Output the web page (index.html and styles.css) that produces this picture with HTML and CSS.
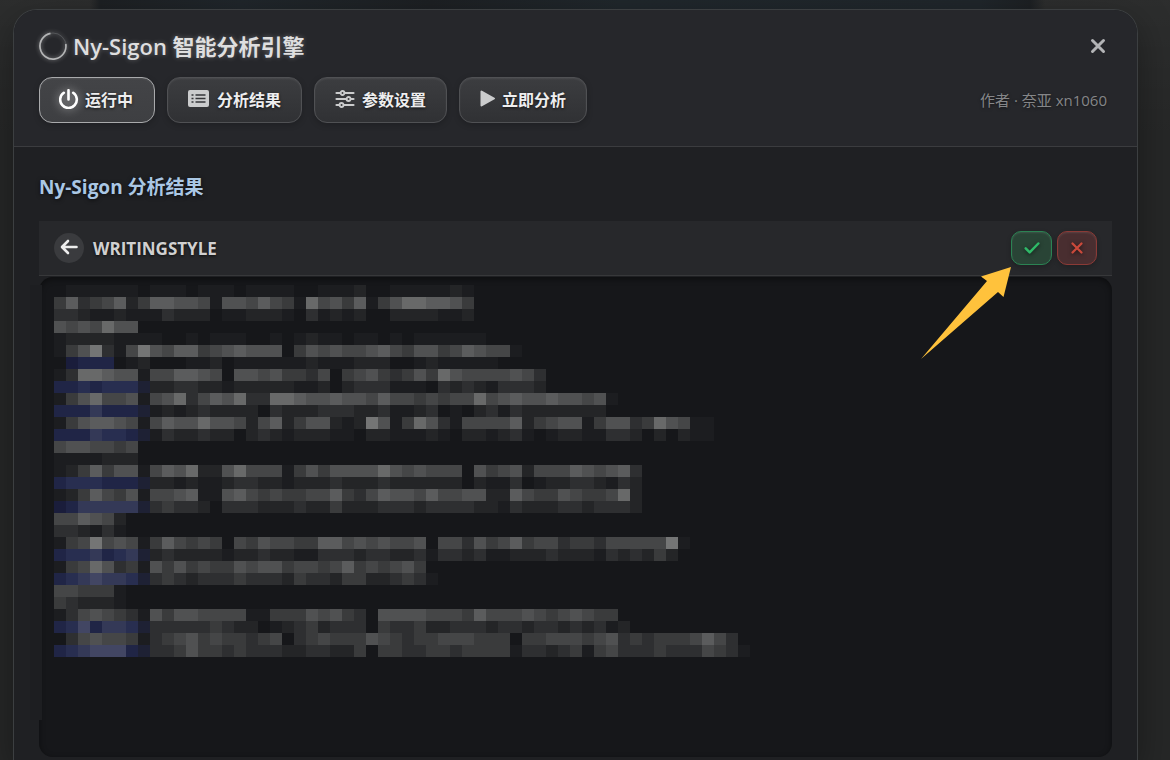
FILE: index.html
```html
<!DOCTYPE html>
<html lang="zh-CN">
<head>
<meta charset="utf-8">
<meta name="viewport" content="width=device-width, initial-scale=1">
<title>Ny-Sigon 智能分析引擎</title>
<link rel="stylesheet" href="styles.css">
</head>
<body>
<main class="panel">
  <header class="panel-header">
    <div class="title-row">
      <svg class="ring" viewBox="0 0 30 30" aria-hidden="true">
        <circle cx="15" cy="15" r="13" fill="none" stroke="#55575a" stroke-width="1"/>
        <path d="M12.5 2.3A13 13 0 1 0 27.8 13" fill="none" stroke="#b4b5b6" stroke-width="1.7"/>
      </svg>
      <h1 class="title">Ny-Sigon 智能分析引擎</h1>
      <button class="close" type="button" aria-label="关闭">
        <svg viewBox="0 0 16 16" width="16" height="16" aria-hidden="true"><path d="M2.500 2.500l11 11M13.500 2.500l-11 11" fill="none" stroke="currentColor" stroke-width="3" stroke-linecap="round"/></svg>
      </button>
    </div>
    <div class="action-row">
      <nav class="tabs">
        <button class="tab tab-active" type="button">
          <svg class="glow" viewBox="0 0 20 20" width="20" height="20" aria-hidden="true"><path d="M9.500 1.200v9.300M4.800 3.800a8.300 8.300 0 1 0 9.400 0" fill="none" stroke="currentColor" stroke-width="2.600" stroke-linecap="round"/></svg>
          运行中
        </button>
        <button class="tab" type="button">
          <svg viewBox="0 0 22 18" width="22" height="18" aria-hidden="true"><rect width="21" height="17" rx="2" fill="currentColor"/><path d="M7.500 5h10M7.500 8.500h10M7.500 12h10M3.500 5h2M3.500 8.500h2M3.500 12h2" stroke="#343538" stroke-width="1.500"/></svg>
          分析结果
        </button>
        <button class="tab" type="button">
          <svg viewBox="0 0 20 18" width="20" height="18" fill="none" stroke="currentColor" stroke-linecap="round" aria-hidden="true"><path d="M1.500 3h4M9.500 3h9M1.500 9h10M16 9h2.500M1.500 15h3M9 15h9.500" stroke-width="2.200"/><circle cx="7.500" cy="3" r="2" stroke-width="1.800"/><circle cx="13.500" cy="9" r="2" stroke-width="1.800"/><circle cx="6.500" cy="15" r="2" stroke-width="1.800"/></svg>
          参数设置
        </button>
        <button class="tab" type="button">
          <svg viewBox="0 0 15 18" width="15" height="18" aria-hidden="true"><path d="M1.500 1.500v14L14 8.500z" fill="currentColor" stroke="currentColor" stroke-width="2" stroke-linejoin="round"/></svg>
          立即分析
        </button>
      </nav>
      <span class="author">作者 · 奈亚 xn1060</span>
    </div>
  </header>
  <section class="results">
    <h2 class="subtitle">Ny-Sigon 分析结果</h2>
    <div class="toolbar">
      <button class="back" type="button" aria-label="返回">
        <svg viewBox="0 0 18 18" width="18" height="18" aria-hidden="true"><path d="M8 2L2 8l6 6M2.500 8H16.500" fill="none" stroke="currentColor" stroke-width="2.600" stroke-linecap="round" stroke-linejoin="round"/></svg>
      </button>
      <h3 class="entry-name">WRITINGSTYLE</h3>
      <button class="decide accept" type="button" aria-label="保存">
        <svg viewBox="0 0 16 14" width="16" height="14" aria-hidden="true"><path d="M1.700 7.300l4 4L14.300 2.500" fill="none" stroke="currentColor" stroke-width="2.500" stroke-linecap="round" stroke-linejoin="round"/></svg>
      </button>
      <button class="decide reject" type="button" aria-label="取消">
        <svg viewBox="0 0 14 14" width="14" height="14" aria-hidden="true"><path d="M2.500 2.500l9 9M11.500 2.500l-9 9" fill="none" stroke="currentColor" stroke-width="2.300" stroke-linecap="round"/></svg>
      </button>
      <svg class="pointer" viewBox="0 0 90 93" width="90" height="93" aria-hidden="true"><path d="M0 92L66 14 60 9.500 90 0 82.500 30 77 25z" fill="#ffc23c"/></svg>
    </div>
    <div class="editor">
      <svg class="mosaic" width="720" height="384" shape-rendering="crispEdges" role="img" aria-label="已打码内容"></svg>
    </div>
  </section>
</main>
<script src="mosaic.js"></script>
</body>
</html>
```
FILE: styles.css
```css
* { box-sizing: border-box; }

body {
  margin: 0;
  min-height: 100vh;
  display: flex;
  overflow: hidden;
  padding: 9px 32px 0 13px;
  color: #dededf;
  font-family: "Open Sans", "Noto Sans CJK SC", sans-serif;
  background:
    linear-gradient(90deg, transparent 90px, #1d2023 100px, #20262b 240px, #1d2023 430px, #20272c 620px, #20262b 980px, #1d2023 1030px, transparent 1045px) 0 0 / 100% 24px no-repeat,
    linear-gradient(180deg, rgba(255, 255, 255, .03), transparent 140px),
    #262727;
}

h1, h2, h3 { margin: 0; }

button {
  font: inherit;
  color: inherit;
  padding: 0;
  cursor: pointer;
}

svg { display: block; flex: none; }

.panel {
  flex: 1;
  display: flex;
  flex-direction: column;
  border: 1px solid #3c3f41;
  border-bottom: 0;
  border-radius: 24px 24px 0 0;
  background: #1f2023;
  box-shadow: 0 12px 36px rgba(0, 0, 0, .35);
}

.panel-header {
  padding: 19px 25px 23px;
  border-bottom: 1px solid #3b3c3f;
  border-radius: 23px 23px 0 0;
  background: #26272b;
}

.title-row {
  display: flex;
  align-items: center;
  height: 34px;
}

.ring {
  width: 30px;
  height: 30px;
  margin: 0 5px 0 -1px;
  filter: drop-shadow(0 0 2px rgba(255, 255, 255, .45));
}

.title {
  font-size: 22px;
  line-height: 36px;
  font-weight: 600;
  text-shadow: 0 0 5px rgba(255, 255, 255, .3);
}

.close {
  display: grid;
  place-items: center;
  width: 28px;
  height: 28px;
  margin: 0 0 0 auto;
  border: 0;
  background: none;
  color: #b3b4b6;
}

.action-row {
  display: flex;
  align-items: center;
  justify-content: space-between;
  margin-top: 14px;
}

.tabs { display: flex; gap: 12px; }

.tab {
  display: flex;
  align-items: center;
  gap: 7px;
  height: 46px;
  padding: 0 20px 2px 19px;
  border: 1px solid #505154;
  border-radius: 13px;
  background: linear-gradient(180deg, #3c3d40, #303134);
  box-shadow: inset 0 1px 2px rgba(255, 255, 255, .08), 0 2px 6px rgba(0, 0, 0, .2);
  color: #eeeeef;
  font-size: 16px;
  font-weight: 700;
  text-shadow: 0 1px 3px rgba(0, 0, 0, .7);
}

.tab:not(.tab-active) { padding: 0 20px 2px; }

.tab svg { color: #cbcccd; }

.tab-active {
  gap: 6px;
  padding-right: 21px;
  border-color: #a9aaac;
  background: linear-gradient(180deg, #434447, #3e3f42);
}

.tab-active .glow {
  color: #fff;
  filter: drop-shadow(0 0 5px rgba(255, 255, 255, .6));
}

.author {
  padding: 0 5px 2px 0;
  color: #858688;
  font-size: 15px;
  text-shadow: 0 1px 3px rgba(0, 0, 0, .5);
}

.results {
  flex: 1;
  display: flex;
  flex-direction: column;
  padding: 25px 25px 3px;
}

.subtitle {
  margin-bottom: 18px;
  color: #aac7e4;
  font-size: 19px;
  line-height: 31px;
  font-weight: 700;
  text-shadow: 0 1px 4px rgba(0, 0, 0, .7);
}

.toolbar {
  position: relative;
  z-index: 1;
  display: flex;
  align-items: center;
  height: 55px;
  padding: 0 15px;
  border-bottom: 1px solid #37383a;
  background: #27282b;
}

.back {
  display: grid;
  place-items: center;
  width: 30px;
  height: 30px;
  border: 0;
  border-radius: 50%;
  background: #3a3b3e;
  color: #ededed;
}

.entry-name {
  margin: 0 auto 0 9px;
  color: #d0d0d0;
  font-size: 17px;
  font-weight: 700;
  text-shadow: 0 1px 3px rgba(0, 0, 0, .7);
}

.decide {
  display: grid;
  place-items: center;
  width: 40px;
  height: 34px;
  border: 1px solid;
  border-radius: 10px;
  box-shadow: inset 0 1px 2px rgba(255, 255, 255, .1), 0 2px 5px rgba(0, 0, 0, .2);
}

.decide svg { filter: drop-shadow(0 1px 2px rgba(0, 0, 0, .6)); }

.accept { width: 41px; border-color: #2b8353; background: #294436; color: #2fb968; }
.reject { margin-left: 5px; border-color: #8b3a36; background: #492e30; color: #ca493b; }

.pointer {
  position: absolute;
  top: 46px;
  right: 101px;
}

.editor {
  position: relative;
  flex: 1;
  margin-top: 1px;
  padding: 8px 15px;
  border-radius: 14px;
  background: #16171a;
  box-shadow: inset 0 2px 6px rgba(0, 0, 0, .45);
}

.editor::before {
  content: "";
  position: absolute;
  top: 8px;
  bottom: 37px;
  left: -9px;
  width: 12px;
  background: #1d1e21;
}

.mosaic { max-width: 100%; }
```
FILE: mosaic.js
```js
// One string per row of blocks: digits are greys, letters a-f are blues.
const rows = [
  "01111110111011101111001112001111121",
  "47345724776651665754185647146887764",
  "33211211132220112221031212002222112",
  "6565866",
  "1222211110010111001012110110101111110",
  "146931596577456766604656556754664576551",
  "0abbb012000112011111121112220012111110",
  "13887661557765066564435045643464865555653",
  "bbcbcccf223322122222112023331110323213332",
  "14685561568357683388766766575545455856766766561",
  "bbbdbbbf12123222203222333223112301023132222222",
  "1467765157668665257246621296148631555572456614663486511",
  "bbbdccbf13223220232122211022111210221231012211332020211",
  "5665545",
  "1111222",
  "1247466157682268555146466668656555064562555765673",
  "bcccbbbf22121123322122232223222222021130122332132",
  "1247546155671167545445574357665755662275446544582",
  "abdddddf34332033322232242223332333322132223323332",
  "557652",
  "332131",
  "14595651475454054655447756565560553645745534435555591",
  "bccdbcdf23222212232211333233223133231122232221323242",
  "1458634164645446566455457454564",
  "bcdeddcf343233343332433244223431",
  "554441",
  "432221",
  "13565431646655551144465643066665554755565456544",
  "bcebddcf3333343220123423330433422333233233232312",
  "035655413456454434503454446543445554440445554563434445753",
  "bcdeeebf33464434333223322404433443444413323414533343335431"
];
const palette = {
  1: "#1c1d20", 2: "#242527", 3: "#2e2f31", 4: "#3a3b3c", 5: "#454647",
  6: "#505152", 7: "#5b5c5d", 8: "#686969", 9: "#747575",
  a: "#1a1d3b", b: "#202546", c: "#282e50", d: "#343957", e: "#424663", f: "#1e2134"
};
const size = 12;
const svg = document.querySelector(".mosaic");
rows.forEach((row, r) => {
  [...row].forEach((level, c) => {
    if (level === "0") return;
    const rect = document.createElementNS("http://www.w3.org/2000/svg", "rect");
    rect.setAttribute("x", c * size);
    rect.setAttribute("y", r * size);
    rect.setAttribute("width", size);
    rect.setAttribute("height", size);
    rect.setAttribute("fill", palette[level]);
    svg.append(rect);
  });
});
```
